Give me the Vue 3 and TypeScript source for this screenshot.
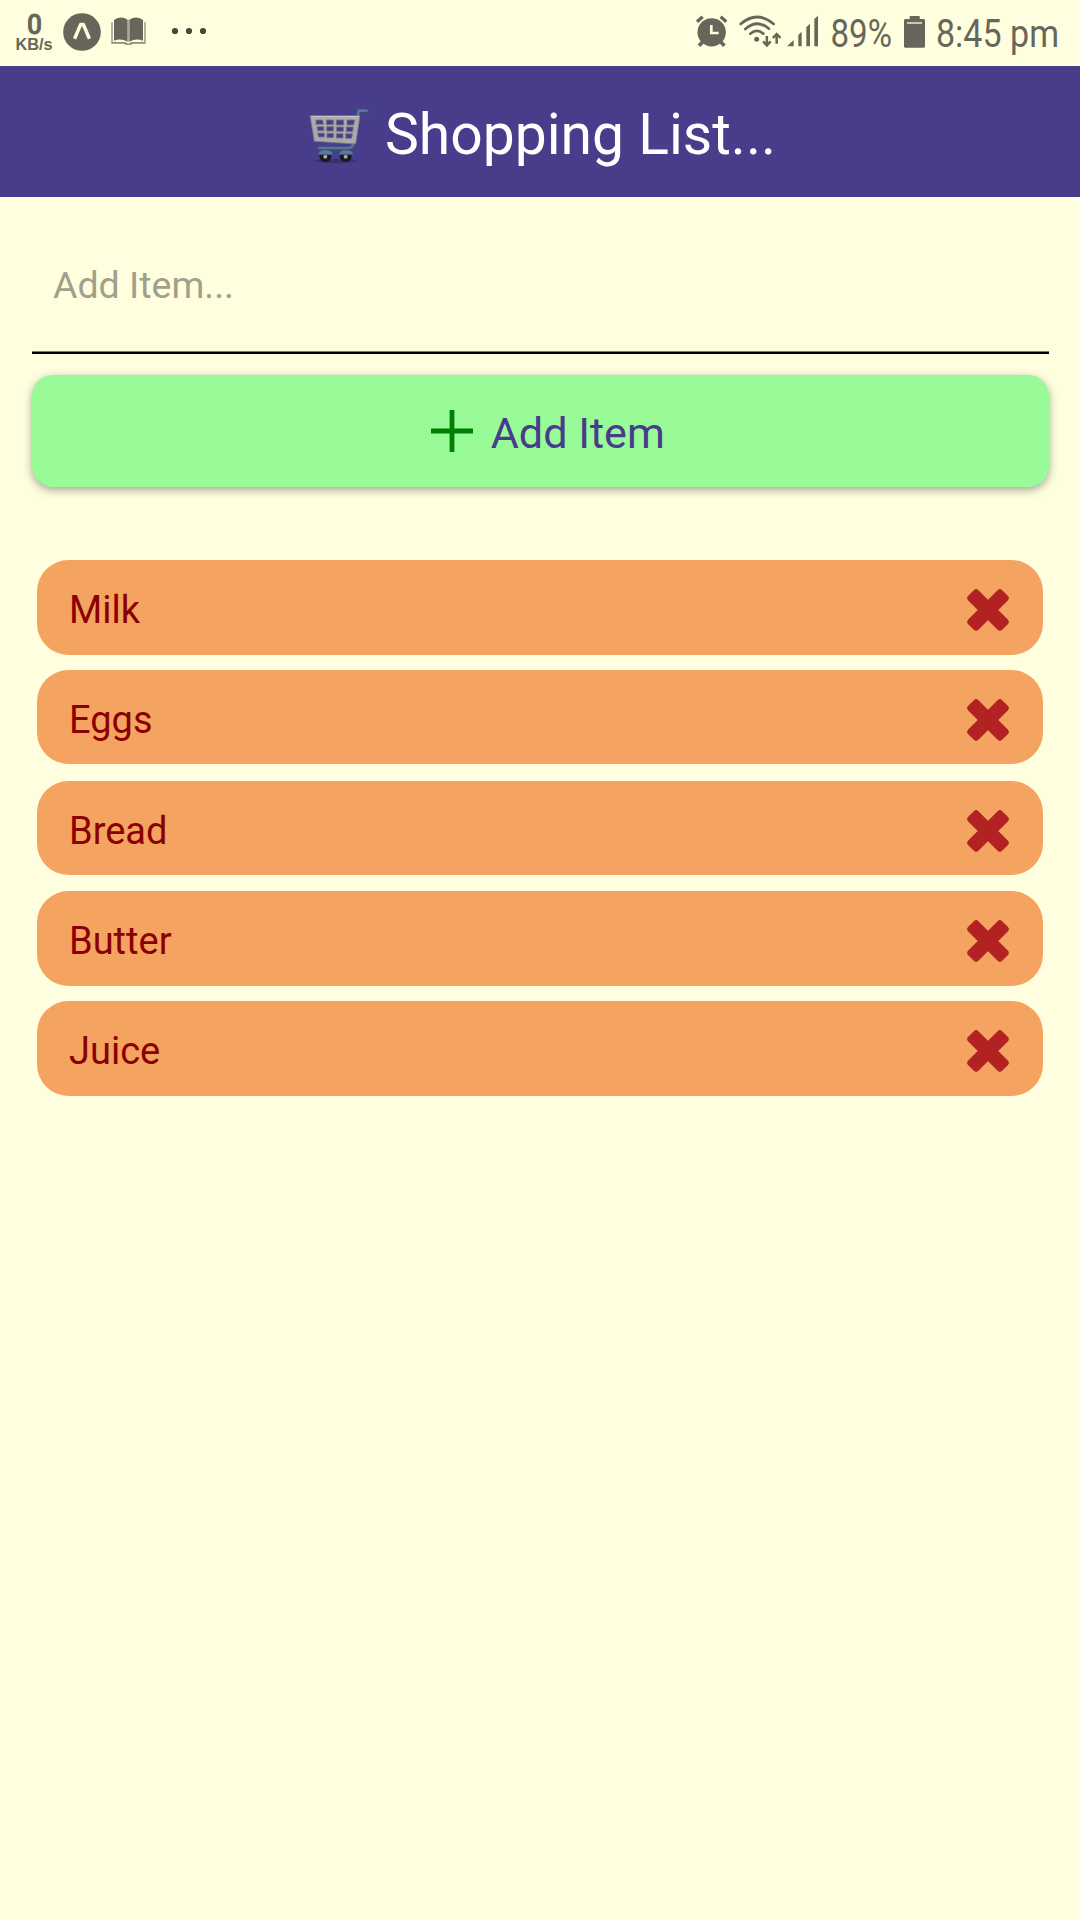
<script setup lang="ts">
import { ref } from 'vue'

interface Item {
  id: number
  text: string
}

const items = ref<Item[]>([
  { id: 1, text: 'Milk' },
  { id: 2, text: 'Eggs' },
  { id: 3, text: 'Bread' },
  { id: 4, text: 'Butter' },
  { id: 5, text: 'Juice' },
])
const draft = ref('')

function addItem() {
  const text = draft.value.trim()
  if (!text) return
  items.value.unshift({ id: Date.now(), text })
  draft.value = ''
}

function removeItem(id: number) {
  items.value = items.value.filter((item) => item.id !== id)
}
</script>

<template>
  <div class="screen">
    <div class="status">
      <svg class="net" width="46" height="66" viewBox="0 0 46 66">
        <text x="15" y="34" font-size="28.5" font-weight="500" textLength="15" lengthAdjust="spacingAndGlyphs" stroke="#66675a" stroke-width="0.8">0</text>
        <text class="unit" x="3.5" y="49.5" font-size="16" textLength="37" lengthAdjust="spacingAndGlyphs">KB/s</text>
      </svg>
      <svg class="expo" width="38" height="38" viewBox="0 0 112 112">
        <circle cx="56" cy="56" r="55.5" fill="#66675a" />
        <path d="M34 76 L52 34 H60 L78 76" fill="none" stroke="#ffffe0" stroke-width="10" stroke-linejoin="round" />
      </svg>
      <svg class="book" width="35" height="28" viewBox="0 0 105 84">
        <path d="M1 16H5V75H38Q46 75 52 80Q58 75 66 75H100V16H104V80H66Q62 84 52 84Q42 84 38 80H1Z" fill="#8d8e7b" />
        <path d="M9 9Q30-5 50 8V74Q30 62 9 71Z" fill="#66675a" />
        <path d="M96 9Q75-5 55 8V74Q75 62 96 71Z" fill="#66675a" />
        <path d="M50 8H55V74H50Z" fill="#a9aa95" />
      </svg>
      <svg class="dots" width="36" height="8" viewBox="0 0 36 8">
        <circle cx="4" cy="4" r="3.1" /><circle cx="18" cy="4" r="3.1" /><circle cx="32" cy="4" r="3.1" />
      </svg>
      <span class="spacer"></span>
      <svg class="alarm" width="32" height="32" viewBox="0 0 96 96">
        <circle cx="47" cy="52" r="42.5" />
        <path d="M3 20L20 5M91 20L74 5" stroke="#66675a" stroke-width="10" />
        <path d="M20 80L9 92M74 80L85 92" stroke="#66675a" stroke-width="11" />
        <path d="M46 30V54H68" fill="none" stroke="#ffffe0" stroke-width="8" />
      </svg>
      <svg class="wifi" width="43" height="33" viewBox="0 0 129 99">
        <g fill="none" stroke="#66675a" stroke-width="8" stroke-linecap="round">
          <path d="M5 27Q54-15 104 27" /><path d="M19 42Q54 11 90 41" /><path d="M34 56Q54 39 73 56" />
        </g>
        <circle cx="53" cy="73" r="7.5" />
        <g fill="none" stroke="#66675a" stroke-width="7.5">
          <path d="M83.500 63V90M72 79L83.500 91L95 79" /><path d="M113 86V58M101.500 69L113 57L124.500 69" />
        </g>
      </svg>
      <svg class="signal" width="32" height="32" viewBox="0 0 96 96">
        <path d="M0 94L20 75V94ZM34 60L44 50V94H34ZM58 37L69 26V94H58ZM82 12L93 2V94H82Z" />
      </svg>
      <svg class="pct" width="63" height="66" viewBox="0 0 63 66">
        <text x="1.500" y="46.7" font-size="38.5" textLength="61.5" lengthAdjust="spacingAndGlyphs">89%</text>
      </svg>
      <svg class="battery" width="21" height="32" viewBox="0 0 63 96">
        <path d="M17 0H47V9H60L63 12V92L60 95H3L0 92V12L3 9H17Z" />
        <path d="M9 18H54V24H9Z" fill="#c8c9b1" />
      </svg>
      <svg class="time" width="124" height="66" viewBox="0 0 124 66">
        <text x="0" y="46.7" font-size="38.5" textLength="123" lengthAdjust="spacingAndGlyphs">8:45 pm</text>
      </svg>
    </div>

    <header class="header">
      <svg class="cart" width="62" height="56" viewBox="55 52 186 168">
        <ellipse cx="137" cy="214" rx="64" ry="6" fill="#3a2f70" />
        <g fill="none" stroke-linejoin="round" stroke-linecap="round">
          <path d="M232 65H207L190 168Q188 177 178 177H88" stroke="#394c70" stroke-width="14" />
          <path d="M231 63H207L189 166Q187 175 178 175H89" stroke="#5a719b" stroke-width="8" />
        </g>
        <circle cx="107" cy="199" r="18" fill="#17181c" />
        <circle cx="168" cy="199" r="18" fill="#17181c" />
        <circle cx="107" cy="201" r="6" fill="#a5a8aa" />
        <circle cx="168" cy="201" r="6" fill="#a5a8aa" />
        <path d="M85 195Q88 181 103 180H112Q128 183 131 195ZM147 195Q150 181 165 180H173Q189 183 192 195Z" fill="#5f769d" stroke="#3c4d70" stroke-width="2" />
        <path fill-rule="evenodd" fill="#aaa9ad" stroke="#77777e" stroke-width="2.5" stroke-linejoin="round" d="M61 78H211L198 163L74 155Z
          M79 91V104H101L99 91ZM110 91V105H131V91ZM140 91V106H162V91ZM172 91V106H192L195 91Z
          M82 111L84 123H103L102 111ZM111 111V124H131V111ZM141 112V125H161V112ZM170 112V126H189L191 112Z
          M84 130L87 142H104V131ZM112 131V144H131V131ZM140 132V145H160V132ZM168 132V146H186L188 132Z" />
        <path d="M66 81H207" stroke="#cbcacd" stroke-width="3" />
      </svg>
      <h1>Shopping List...</h1>
    </header>

    <main class="content">
      <input v-model="draft" class="field" type="text" placeholder="Add Item..." />
      <button class="add" type="button" @click="addItem">
        <svg class="plus" width="42" height="42" viewBox="0 0 42 42">
          <path d="M0 21H42M21 0V42" stroke="#008000" stroke-width="4.8" />
        </svg>
        <span>Add Item</span>
      </button>

      <ul class="list">
        <li v-for="item in items" :key="item.id" class="row">
          <span>{{ item.text }}</span>
          <svg class="remove" width="42" height="42" viewBox="0 0 42 42" @click="removeItem(item.id)">
            <g fill="#b22222" transform="rotate(45 21 21)">
              <rect x="-3" y="13.8" width="48" height="14.4" rx="3.2" />
              <rect x="13.8" y="-3" width="14.4" height="48" rx="3.2" />
            </g>
          </svg>
        </li>
      </ul>
    </main>
  </div>
</template>

<style>
body {
  background: #ffffe0;
}
</style>

<style scoped>
.screen {
  box-sizing: border-box;
  width: 1080px;
  height: 1920px;
  overflow: hidden;
  background: #ffffe0;
  font-family: Roboto, "Liberation Sans", sans-serif;
}
svg {
  display: block;
  flex: none;
  overflow: visible;
}
.status {
  display: flex;
  align-items: flex-start;
  height: 66px;
  padding: 0 20px 0 12px;
  fill: #66675a;
}
.unit {
  font-family: "Liberation Sans", sans-serif;
  font-weight: 700;
}
.expo {
  margin: 12.5px 0 0 4.5px;
}
.book {
  margin: 17px 0 0 10.5px;
}
.dots {
  margin: 27px 0 0 24.5px;
  fill: #46473c;
}
.spacer {
  flex: 1;
}
.alarm {
  margin: 15px 0 0;
}
.wifi {
  margin: 15px 0 0 11.5px;
}
.signal {
  margin: 15px 0 0 5px;
}
.pct {
  margin-left: 10px;
}
.battery {
  margin: 16px 0 0 12px;
}
.time {
  margin-left: 11px;
}
.header {
  box-sizing: border-box;
  display: flex;
  align-items: flex-start;
  height: 131px;
  padding: 35px 0 0 308px;
  background: #483d8b;
}
.cart {
  margin: 6px 15px 0 0;
}
h1 {
  margin: 0;
  color: #fff;
  font-size: 57px;
  font-weight: 400;
  line-height: 68px;
  white-space: nowrap;
}
.content {
  display: flex;
  flex-direction: column;
  padding: 0 31px 0 32px;
}
.field {
  box-sizing: border-box;
  width: 100%;
  height: 157px;
  padding: 21px 21px 0;
  border: 0;
  border-bottom: 2px solid #000;
  border-radius: 0;
  outline: 0;
  background: transparent;
  box-shadow: inset 0 -1px #77786a;
  color: #000;
  font-family: inherit;
  font-size: 37.5px;
}
.field::placeholder {
  color: #a0a08b;
  opacity: 1;
}
.add {
  display: flex;
  align-items: center;
  justify-content: center;
  gap: 18px;
  height: 112px;
  margin-top: 21px;
  padding: 0 0 0 14.5px;
  border: 0;
  border-radius: 21px;
  background: #98fb98;
  box-shadow: 0 3px 10px rgba(0, 0, 0, 0.36);
  color: #483d8b;
  font-family: inherit;
  font-size: 43.2px;
}
.add span {
  padding-top: 4px;
}
.list {
  display: flex;
  flex-direction: column;
  gap: 15px;
  margin: 73px 6px 0 5px;
  padding: 0;
  list-style: none;
}
.row {
  display: flex;
  align-items: center;
  justify-content: space-between;
  box-sizing: border-box;
  height: 95px;
  padding: 4px 34.5px 0 32px;
  border-radius: 31.5px;
  background: #f4a460;
  color: #8b0000;
  font-size: 38px;
}
.row:nth-child(2),
.row:nth-child(3) {
  height: 94px;
  padding-top: 6px;
}
.row:nth-child(3) {
  margin-top: 2px;
}
.row:nth-child(4) {
  margin-top: 1px;
}
</style>
